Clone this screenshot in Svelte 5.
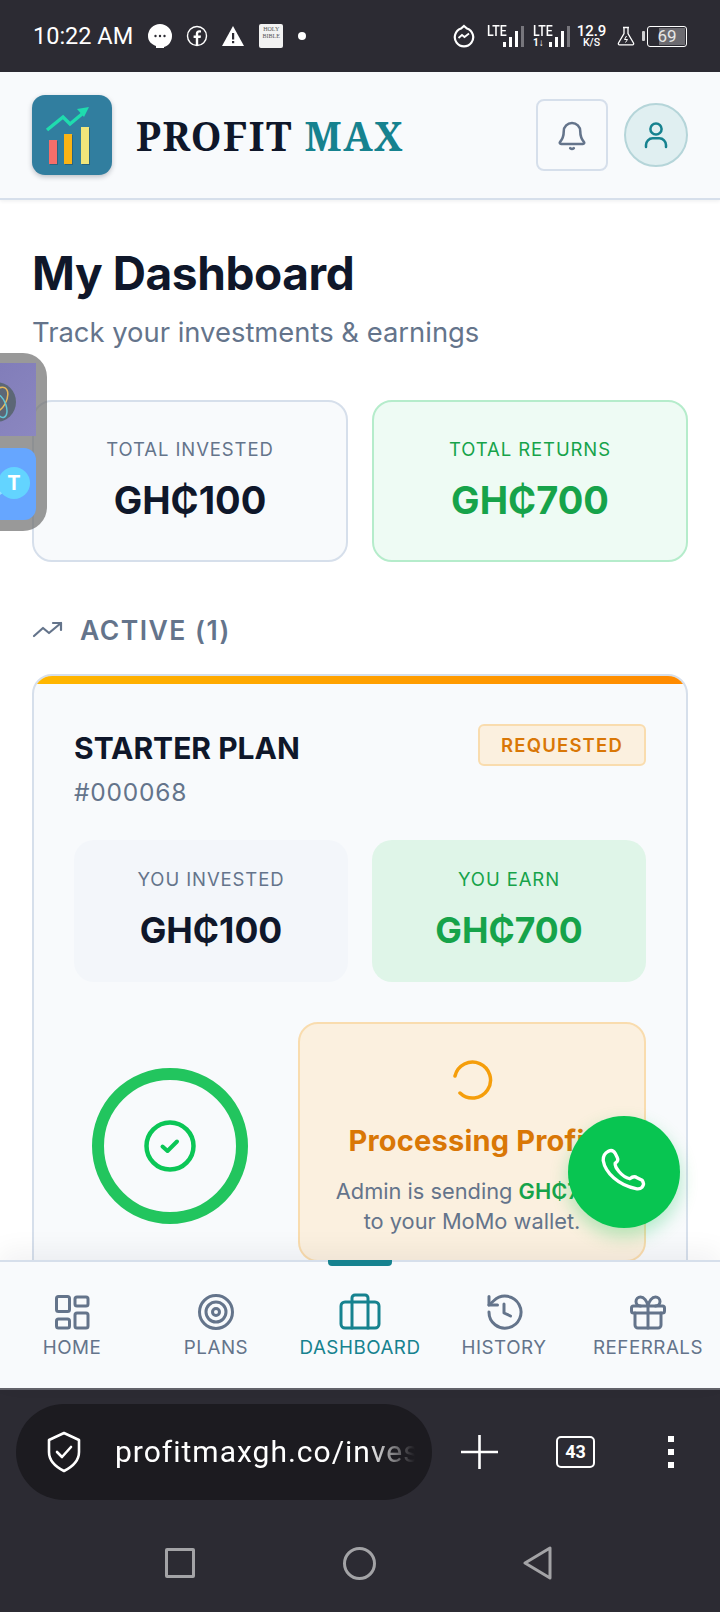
<script>
	const navItems = [
		{ id: 'home', label: 'HOME' },
		{ id: 'plans', label: 'PLANS' },
		{ id: 'dashboard', label: 'DASHBOARD', active: true },
		{ id: 'history', label: 'HISTORY' },
		{ id: 'referrals', label: 'REFERRALS' }
	];
	const signal = [5, 10, 16, 21];
</script>

<div class="screen">
	<div class="statusbar">
		<span class="time">10:22 AM</span>
		<svg class="st" width="26" height="26" viewBox="0 0 26 26"><path d="M13 1a12 12 0 0 1 12 12c0 6-4 10-8 11v1H9v-2C4 21 1 18 1 13A12 12 0 0 1 13 1z" fill="#fff"/><circle cx="8.5" cy="13" r="1.2" fill="#2c2b33"/><circle cx="13" cy="13" r="1.2" fill="#2c2b33"/><circle cx="17.5" cy="13" r="1.2" fill="#2c2b33"/></svg>
		<svg class="st" width="22" height="22" viewBox="0 0 22 22"><circle cx="11" cy="11" r="9.5" fill="none" stroke="#fff" stroke-width="1.4"/><path d="M12.2 20v-7h2.4l.4-2.6h-2.8V9c0-.9.4-1.4 1.5-1.4H15V5.4c-.5-.1-1.1-.2-1.8-.2-2 0-3.4 1.2-3.4 3.5v1.7H7.6V13h2.2v7z" fill="#fff"/></svg>
		<svg class="st" width="24" height="22" viewBox="0 0 24 22"><path d="M12 1 23 21H1z" fill="#fff"/><rect x="11" y="8" width="2.2" height="6.5" fill="#2c2b33"/><rect x="11" y="16" width="2.2" height="2.2" fill="#2c2b33"/></svg>
		<div class="bible"><span>HOLY<br />BIBLE</span></div>
		<span class="dot"></span>
		<div class="grow"></div>
		<svg class="st messenger" width="22" height="24" viewBox="0 0 22 24"><path d="M11 2l3 2.5a9.2 9.2 0 1 1-6 0z" fill="none" stroke="#fff" stroke-width="2.2"/><path d="M5.5 14l3.5-3 2.5 2 4.5-3.5" fill="none" stroke="#fff" stroke-width="1.8"/></svg>
		<div class="net">
			<span class="lte">LTE</span>
			<span class="bars">{#each signal as h, i}<i class:off={i === 3} style="height:{h}px"></i>{/each}</span>
		</div>
		<div class="net second">
			<span class="lte">LTE</span>
			<span class="updown">1↓</span>
			<span class="bars">{#each signal as h, i}<i class:off={i === 3} style="height:{h}px"></i>{/each}</span>
		</div>
		<div class="speed"><b>12.9</b><b class="unit">K/S</b></div>
		<svg class="flask" width="18" height="20" viewBox="0 0 18 20"><path d="M6 1.5h6M7 1.5v6L1.5 17c-.5 1 0 1.8 1 1.8h13c1 0 1.5-.8 1-1.8L11 7.5v-6" fill="none" stroke="#fff" stroke-width="1.3"/><path d="M9.5 10l-2 3.5h3l-2 3" fill="none" stroke="#fff" stroke-width="1"/></svg>
		<span class="nub"></span>
		<div class="battery"><span class="fill"></span><span class="pct">69</span></div>
	</div>

	<header class="topbar">
		<div class="logo">
			<svg width="80" height="80" viewBox="0 0 80 80">
				<rect x="18" y="46" width="8" height="24" fill="#2a6480" />
				<rect x="33" y="40" width="8" height="30" fill="#2a6480" />
				<rect x="50" y="33" width="8" height="37" fill="#2a6480" />
				<rect x="17" y="45" width="8" height="24" fill="#f56e6a" />
				<rect x="32" y="39" width="8" height="30" fill="#fbb414" />
				<rect x="49" y="32" width="8" height="37" fill="#f2e67a" />
				<path d="M15 35 31 22l7 7 12-10" fill="none" stroke="#1fdcae" stroke-width="3.5" />
				<path d="M45 14l12-2-5 10z" fill="#1fdcae" />
			</svg>
		</div>
		<div class="brand">PROFIT <span>MAX</span></div>
		<div class="grow"></div>
		<button class="bell" aria-label="Notifications">
			<svg width="36" height="36" viewBox="0 0 24 24" fill="none" stroke="#64748b" stroke-width="1.7" stroke-linecap="round" stroke-linejoin="round"><path d="M6.5 9.5a5.5 5.5 0 0 1 11 0c0 4 1 5.5 2.5 7.2.4.5.1 1.3-.7 1.3H4.7c-.8 0-1.1-.8-.7-1.3C5.500 15 6.500 13.500 6.500 9.500z"/><path d="M10.8 20.8c.7.5 1.7.5 2.4 0"/></svg>
		</button>
		<button class="avatar" aria-label="Profile">
			<svg width="32" height="32" viewBox="0 0 24 24" fill="none" stroke="#16828f" stroke-width="1.9" stroke-linecap="round"><circle cx="12" cy="7.5" r="4.2"/><path d="M4.5 21v-1.5a5 5 0 0 1 5-5h5a5 5 0 0 1 5 5V21"/></svg>
		</button>
	</header>

	<main class="content">
		<div class="switcher">
			<div class="app-a">
				<svg class="globe" width="40" height="40" viewBox="0 0 40 40" fill="none">
					<circle cx="20" cy="20" r="20" fill="#5c6776" />
					<ellipse cx="22" cy="18" rx="8" ry="14" stroke="#e8b85c" stroke-width="1.5" transform="rotate(30 22 18)" />
					<ellipse cx="24" cy="24" rx="6" ry="12" stroke="#62c6d6" stroke-width="1.5" transform="rotate(-20 24 24)" />
				</svg>
			</div>
			<div class="app-b">
				<svg class="tail" width="44" height="30" viewBox="0 0 44 30" fill="none"><path d="M0 26c14 3 26-1 32-10" stroke="#8fdfff" stroke-width="3" /></svg>
				<span class="bubble">T</span>
			</div>
		</div>

		<h1>My Dashboard</h1>
		<p class="sub">Track your investments &amp; earnings</p>

		<div class="totals">
			<div class="total">
				<span class="k">TOTAL INVESTED</span>
				<span class="v">GH₵100</span>
			</div>
			<div class="total green">
				<span class="k">TOTAL RETURNS</span>
				<span class="v">GH₵700</span>
			</div>
		</div>

		<div class="section">
			<svg width="32" height="20" viewBox="0 0 32 20" fill="none" stroke="#64748b" stroke-width="2.2" stroke-linecap="round" stroke-linejoin="round"><path d="M2 16l9-8 6 5 12-10"/><path d="M21 3h8v7"/></svg>
			<span>ACTIVE (1)</span>
		</div>

		<section class="card">
			<div class="stripe"></div>
			<div class="card-body">
				<div class="card-head">
					<div>
						<div class="plan">STARTER PLAN</div>
						<div class="ref">#000068</div>
					</div>
					<span class="badge">REQUESTED</span>
				</div>

				<div class="stats">
					<div class="stat">
						<span class="k">YOU INVESTED</span>
						<span class="v">GH₵100</span>
					</div>
					<div class="stat green">
						<span class="k">YOU EARN</span>
						<span class="v">GH₵700</span>
					</div>
				</div>

				<div class="progress">
					<div class="ring-col">
						<div class="ring">
							<svg width="52" height="52" viewBox="0 0 52 52" fill="none" stroke="#0bc656" stroke-linecap="round" stroke-linejoin="round"><circle cx="26" cy="26" r="23.5" stroke-width="4.5"/><path d="M18.5 26.5l5 4.5 9.5-9.5" stroke-width="4"/></svg>
						</div>
					</div>
					<div class="processing">
						<svg class="spin" width="42" height="42" viewBox="0 0 42 42" fill="none" stroke="#f59e0b" stroke-width="3.5" stroke-linecap="round"><path d="M4 17A18 18 0 1 1 9 34"/></svg>
						<h3>Processing Profit</h3>
						<p>Admin is sending <b>GH₵700</b><br />to your MoMo wallet.</p>
					</div>
				</div>
			</div>
		</section>

		<button class="fab" aria-label="Call">
			<svg width="52" height="52" viewBox="0 0 50 50" fill="none" stroke="#fff" stroke-width="3.2" stroke-linejoin="round"><path d="M10 5c3-1.5 5-.5 6.500 2l2 4c1 2 .5 4-2 5.500-.5 4 6 13 14 15 2.500-2 5-2.500 7-1l5 2.500c1.500 2 1.500 4.500 0 6.500-1.500 1.500-4 2-6 1.500C20 38 7 26 5 14 4.800 10 7 6.500 10 5z"/></svg>
		</button>
	</main>

	<nav class="tabs">
		{#each navItems as item}
			<div class="tab" class:active={item.active}>
				{#if item.active}<span class="marker"></span>{/if}
				<svg width="36" height="36" viewBox="0 0 36 36" fill="none" stroke="currentColor" stroke-width="3" stroke-linecap="round" stroke-linejoin="round">
					{#if item.id === 'home'}
						<rect x="2.5" y="2.5" width="13" height="15" rx="2" /><rect x="21" y="3" width="13" height="9" rx="2" /><rect x="21" y="19" width="13" height="15" rx="2" /><rect x="2.5" y="25" width="13" height="9" rx="2" />
					{:else if item.id === 'plans'}
						<circle cx="18" cy="18" r="16.5" /><circle cx="18" cy="18" r="10" /><circle cx="18" cy="18" r="3.5" />
					{:else if item.id === 'dashboard'}
						<rect x="-1" y="8" width="38" height="26" rx="4" /><path d="M10 34V4a3 3 0 0 1 3-3h10a3 3 0 0 1 3 3v30" />
					{:else if item.id === 'history'}
						<path d="M3 18A16 16 0 1 0 8 6.5L3 11" /><path d="M3 2.5V11h8.5" /><path d="M18 10v9l6.5 3" />
					{:else}
						<rect x="1.5" y="12" width="33" height="7" rx="2" /><path d="M18 12v22" /><path d="M5 19v12a3 3 0 0 0 3 3h20a3 3 0 0 0 3-3V19" /><path d="M10.5 12a4.5 4.5 0 0 1 0-9C14 3 17 7 18 12c1-5 4-9 7.5-9a4.5 4.5 0 0 1 0 9" />
					{/if}
				</svg>
				<span>{item.label}</span>
			</div>
		{/each}
	</nav>

	<div class="browser">
		<div class="url">
			<svg width="40" height="44" viewBox="0 0 36 44" fill="none" stroke="#fff" stroke-width="2.6" stroke-linecap="round" stroke-linejoin="round"><path d="M18 3l15 7v12c0 9-7 15-15 19C10 37 3 31 3 22V10z"/><path d="M11 22l5 5 9-10"/></svg>
			<span class="url-text">profitmaxgh.co/inves</span>
		</div>
		<svg class="plus" width="37" height="34" viewBox="0 0 37 34" stroke="#fff" stroke-width="2.6"><path d="M18.5 0v34M0 17h37"/></svg>
		<span class="count">43</span>
		<div class="menu"><i></i><i></i><i></i></div>
	</div>

	<div class="softkeys">
		<span class="sq"></span>
		<span class="ci"></span>
		<svg width="30" height="34" viewBox="0 0 30 34" fill="none" stroke="#a3a3a6" stroke-width="3" stroke-linejoin="round"><path d="M27 2v30L2 17z"/></svg>
	</div>
</div>

<style>
	:global(body) {
		margin: 0;
		background: #fff;
	}
	.screen {
		width: 720px;
		height: 1612px;
		display: flex;
		flex-direction: column;
		overflow: hidden;
		font-family: Inter, 'Noto Sans', sans-serif;
		color: #0f172a;
	}
	.grow {
		flex: 1;
	}

	.statusbar {
		height: 72px;
		background: #2c2b33;
		color: #fff;
		display: flex;
		align-items: center;
		padding: 0 33px;
		flex: none;
		box-sizing: border-box;
	}
	.time {
		font-family: Roboto, sans-serif;
		font-size: 23.5px;
		margin-right: 14px;
	}
	.st {
		flex: none;
		margin-right: 13px;
	}
	.messenger {
		margin-right: 12px;
	}
	.bible {
		width: 24px;
		height: 24px;
		background: #f2f2f2;
		border-radius: 2px;
		color: #555;
		font: 6px/7px 'Liberation Serif', serif;
		text-align: center;
		margin-left: 1px;
		padding-top: 2px;
		box-sizing: border-box;
	}
	.dot {
		width: 8px;
		height: 8px;
		border-radius: 50%;
		background: #fff;
		margin-left: 15px;
	}
	.net {
		position: relative;
		flex: none;
		width: 37px;
		height: 24px;
		margin-right: 9px;
	}
	.net.second {
		margin-right: 8px;
	}
	.lte {
		position: absolute;
		left: 0;
		top: 0;
		font: 500 15px/14px Roboto, sans-serif;
		transform: scaleX(0.82);
		transform-origin: left;
	}
	.updown {
		position: absolute;
		left: 0;
		bottom: 0;
		font: 700 10px/10px Roboto, sans-serif;
	}
	.bars {
		position: absolute;
		right: 0;
		bottom: 1px;
		display: flex;
		align-items: flex-end;
		gap: 3px;
	}
	.bars i {
		width: 3px;
		background: #fff;
	}
	.bars i.off {
		background: #77767c;
	}
	.speed {
		display: flex;
		flex-direction: column;
		align-items: center;
		font-family: Roboto, sans-serif;
		margin-right: 12px;
		width: 27px;
		line-height: 1;
	}
	.speed b {
		font-size: 15px;
		font-weight: 500;
	}
	.speed .unit {
		font-size: 10.5px;
		margin-top: -1px;
	}
	.flask {
		flex: none;
		margin-right: 7px;
	}
	.nub {
		width: 3px;
		height: 10px;
		background: #d0d0d2;
		border-radius: 1px;
		margin-right: 2px;
		flex: none;
	}
	.battery {
		width: 40px;
		height: 21px;
		flex: none;
		box-sizing: border-box;
		border: 1.5px solid #fff;
		border-radius: 3px;
		position: relative;
		overflow: hidden;
	}
	.fill {
		position: absolute;
		right: 1px;
		top: 1px;
		bottom: 1px;
		width: 26px;
		background: #6b6a70;
	}
	.pct {
		position: absolute;
		inset: 0;
		text-align: center;
		font: 17px/18px Roboto, sans-serif;
		color: #e6e6e6;
	}

	.topbar {
		height: 128px;
		flex: none;
		background: #f8fafc;
		border-bottom: 2px solid #d6dfeb;
		box-shadow: 0 1px 4px rgba(15, 23, 42, 0.08);
		display: flex;
		align-items: center;
		padding: 0 32px;
		box-sizing: border-box;
		position: relative;
		z-index: 1;
	}
	.logo {
		width: 80px;
		height: 80px;
		border-radius: 13px;
		background: #317e9f;
		box-shadow: 0 2px 5px rgba(15, 23, 42, 0.25);
		margin-right: 24px;
		flex: none;
	}
	.logo svg {
		display: block;
	}
	.brand {
		font: 700 39px/1 'Noto Serif', 'DejaVu Serif', 'Liberation Serif', serif;
		letter-spacing: 1.5px;
		white-space: nowrap;
	}
	.brand span {
		color: #16828f;
	}
	.bell {
		width: 72px;
		height: 72px;
		border: 2px solid #d6dfeb;
		border-radius: 8px;
		background: #f8fafc;
		display: flex;
		align-items: center;
		justify-content: center;
		padding: 0;
		margin-right: 16px;
	}
	.avatar {
		width: 64px;
		height: 64px;
		border-radius: 50%;
		border: 2px solid #b5d5d9;
		background: #e0eff1;
		display: flex;
		align-items: center;
		justify-content: center;
		padding: 0;
	}

	.content {
		flex: 1;
		min-height: 0;
		position: relative;
		padding: 0 32px;
		background: #fff;
		overflow: hidden;
	}
	h1 {
		margin: 46px 0 0;
		font-size: 46px;
		line-height: 54px;
		font-weight: 700;
		letter-spacing: -0.4px;
	}
	.sub {
		margin: 15px 0 0;
		font-size: 27.4px;
		line-height: 34px;
		color: #64748b;
	}
	.totals {
		display: grid;
		grid-template-columns: 1fr 1fr;
		gap: 24px;
		margin-top: 51px;
	}
	.total {
		height: 162px;
		box-sizing: border-box;
		border: 2px solid #d6dfeb;
		border-radius: 20px;
		background: #f8fafc;
		display: flex;
		flex-direction: column;
		align-items: center;
		padding-top: 35px;
	}
	.total.green {
		background: #eefbf4;
		border-color: #b5eccb;
	}
	.k {
		font-size: 18.5px;
		line-height: 24px;
		color: #64748b;
		letter-spacing: 0.9px;
	}
	.total .v {
		font-size: 38px;
		line-height: 46px;
		font-weight: 700;
		margin-top: 16px;
	}
	.green .k,
	.green .v {
		color: #16a34a;
	}
	.section {
		display: flex;
		align-items: center;
		gap: 16px;
		margin-top: 50px;
		height: 36px;
		color: #64748b;
		font-size: 26.5px;
		font-weight: 600;
		letter-spacing: 1.5px;
	}

	.card {
		margin-top: 26px;
		height: 700px;
		box-sizing: border-box;
		border: 2px solid #d6dfeb;
		border-radius: 20px 20px 0 0;
		background: #f8fafc;
		overflow: hidden;
	}
	.stripe {
		height: 8px;
		background: linear-gradient(90deg, #ffb700, #ff8a00);
	}
	.card-body {
		padding: 40px 40px 0;
	}
	.card-head {
		display: flex;
		justify-content: space-between;
		align-items: flex-start;
	}
	.plan {
		font-size: 30px;
		line-height: 36px;
		font-weight: 700;
		margin-top: 6px;
	}
	.ref {
		font-size: 24.5px;
		line-height: 30px;
		color: #64748b;
		letter-spacing: 0.8px;
		margin-top: 11px;
	}
	.badge {
		border: 2px solid #f9dcae;
		border-radius: 6px;
		background: #fbf0df;
		color: #d97706;
		font-size: 18.5px;
		font-weight: 600;
		letter-spacing: 1.2px;
		padding: 9px 21px;
		line-height: 20px;
	}
	.stats {
		display: grid;
		grid-template-columns: 1fr 1fr;
		gap: 24px;
		margin-top: 33px;
	}
	.stat {
		height: 142px;
		border-radius: 20px;
		background: #f3f6fa;
		display: flex;
		flex-direction: column;
		align-items: center;
		padding-top: 27px;
		box-sizing: border-box;
	}
	.stat.green {
		background: #dff5e8;
	}
	.stat .v {
		font-size: 35.5px;
		line-height: 44px;
		font-weight: 700;
		margin-top: 18px;
	}
	.progress {
		display: flex;
		gap: 32px;
		margin-top: 40px;
	}
	.ring-col {
		flex: 0 0 192px;
		display: flex;
		justify-content: center;
		padding-top: 46px;
	}
	.ring {
		width: 156px;
		height: 156px;
		box-sizing: border-box;
		border-radius: 50%;
		border: 12px solid #22c55e;
		display: flex;
		align-items: center;
		justify-content: center;
	}
	.processing {
		flex: 1;
		height: 240px;
		box-sizing: border-box;
		border: 2px solid #f9dcae;
		border-radius: 20px;
		background: #fbf0df;
		text-align: center;
		padding: 35px 12px 0;
		overflow: hidden;
	}
	.spin {
		display: block;
		margin: 0 auto;
	}
	.processing h3 {
		margin: 22px 0 0;
		font-size: 29px;
		line-height: 36px;
		font-weight: 700;
		letter-spacing: 0.2px;
		color: #d97706;
		white-space: nowrap;
	}
	.processing p {
		margin: 17px 0 0;
		font-size: 21.8px;
		line-height: 30px;
		color: #64748b;
	}
	.processing b {
		color: #16a34a;
		font-weight: 600;
	}

	.switcher {
		position: absolute;
		left: -24px;
		top: 153px;
		width: 71px;
		height: 178px;
		border-radius: 0 24px 24px 0;
		background: rgba(110, 110, 110, 0.7);
		overflow: hidden;
	}
	.app-a {
		position: absolute;
		left: 0;
		top: 10px;
		width: 60px;
		height: 73px;
		background: linear-gradient(135deg, #7f7bb8, #8b87c0);
	}
	.globe {
		position: absolute;
		left: 0;
		top: 19px;
	}
	.app-b {
		position: absolute;
		left: 0;
		top: 95px;
		width: 60px;
		height: 72px;
		border-radius: 0 12px 12px 0;
		background: #66a6ff;
	}
	.tail {
		position: absolute;
		left: 0;
		top: 22px;
	}
	.bubble {
		position: absolute;
		left: 22px;
		top: 19px;
		width: 32px;
		height: 32px;
		border-radius: 50%;
		background: #63d4ff;
		color: #fff;
		font-size: 20px;
		font-weight: 700;
		line-height: 32px;
		text-align: center;
	}

	.fab {
		position: absolute;
		left: 568px;
		top: 916px;
		width: 112px;
		height: 112px;
		border-radius: 50%;
		border: 0;
		padding: 0;
		background: #08c551;
		box-shadow: 0 8px 18px rgba(8, 197, 81, 0.3);
		display: flex;
		align-items: center;
		justify-content: center;
	}

	.tabs {
		height: 130px;
		flex: none;
		box-sizing: border-box;
		background: #f8fafc;
		border-top: 2px solid #d6dfeb;
		border-bottom: 2px solid #62626a;
		display: grid;
		grid-template-columns: repeat(5, 144px);
		position: relative;
		z-index: 1;
		box-shadow: 0 -10px 24px rgba(15, 23, 42, 0.05);
	}
	.tab {
		position: relative;
		display: flex;
		flex-direction: column;
		align-items: center;
		padding-top: 32px;
		color: #64748b;
		font-size: 18.8px;
		line-height: 24px;
		letter-spacing: 0.5px;
	}
	.tab svg {
		display: block;
		margin-bottom: 6px;
		overflow: visible;
	}
	.tab.active {
		color: #16828f;
	}
	.marker {
		position: absolute;
		top: -2px;
		left: 40px;
		width: 64px;
		height: 6px;
		border-radius: 0 0 4px 4px;
		background: #16828f;
	}

	.browser {
		height: 124px;
		flex: none;
		background: #2c2b33;
		display: flex;
		align-items: center;
		padding-left: 16px;
	}
	.url {
		width: 416px;
		height: 96px;
		border-radius: 48px;
		background: #1c1b20;
		display: flex;
		align-items: center;
		padding-left: 28px;
		box-sizing: border-box;
		overflow: hidden;
		flex: none;
	}
	.url-text {
		margin-left: 31px;
		font: 30px/40px Roboto, sans-serif;
		letter-spacing: 1px;
		white-space: nowrap;
		width: 300px;
		overflow: hidden;
		color: #fff;
		-webkit-mask-image: linear-gradient(90deg, #000 84%, transparent 100%);
		mask-image: linear-gradient(90deg, #000 84%, transparent 100%);
	}
	.plus {
		margin-left: 29px;
		flex: none;
	}
	.count {
		margin-left: 58px;
		width: 39px;
		height: 32px;
		box-sizing: border-box;
		border: 2.5px solid #fff;
		border-radius: 5px;
		color: #fff;
		font: 700 18px/27px Roboto, sans-serif;
		text-align: center;
		flex: none;
	}
	.menu {
		margin-left: 73px;
		display: flex;
		flex-direction: column;
		gap: 7px;
	}
	.menu i {
		width: 6px;
		height: 6px;
		background: #fff;
		display: block;
	}

	.softkeys {
		height: 98px;
		flex: none;
		background: #2c2b33;
		display: flex;
		align-items: center;
		padding-left: 165px;
	}
	.sq {
		width: 30px;
		height: 30px;
		box-sizing: border-box;
		border: 3px solid #a3a3a6;
		border-radius: 2px;
		margin-right: 148px;
	}
	.ci {
		width: 33px;
		height: 33px;
		box-sizing: border-box;
		border: 3px solid #a3a3a6;
		border-radius: 50%;
		margin-right: 147px;
	}
</style>
